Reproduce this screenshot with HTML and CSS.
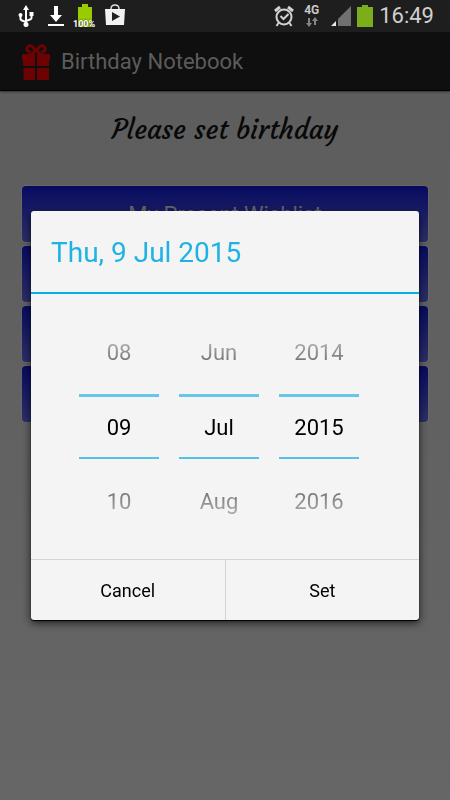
FILE: index.html
```html
<!DOCTYPE html>
<html lang="en">
<head>
<meta charset="utf-8">
<meta name="viewport" content="width=device-width, initial-scale=1">
<title>Birthday Notebook</title>
<link rel="stylesheet" href="styles.css">
</head>
<body>
<div class="status">
  <svg class="usb" width="16" height="24" viewBox="0 0 16 24" fill="none" stroke="#fff" stroke-width="2"><path d="M8 4v16M2.500 12v3q0 1 1.500 1.500L8 18M13.500 11v3q0 1-1.500 1.500L8 17"/><g fill="#fff" stroke="none"><path d="M8 1l3 5H5z"/><circle cx="8" cy="20.500" r="2.500"/><circle cx="2.500" cy="11" r="2"/><path d="M11.500 8h4v4h-4z"/></g></svg>
  <svg class="download" width="16" height="24" viewBox="0 0 16 24" fill="#fff"><path d="M6 2h4v9h4l-6 7-6-7h4zM0 20h16v2H0z"/></svg>
  <div class="charge">
    <svg width="16" height="24" viewBox="0 0 16 24" fill="#99cc00"><path d="M5 0h6v3h4v20H1V3h4z"/></svg>
    <span class="percent">100%</span>
  </div>
  <svg class="store" width="20" height="24" viewBox="0 0 20 24"><path d="M6 8V5q0-4 4-4t4 4v3" fill="none" stroke="#ddd" stroke-width="1.500"/><path d="M0 5h20l-1 16H1z" fill="#f2f2f2"/><path d="M7 8l8 4.500L7 17z" fill="#222"/></svg>
  <svg class="alarm" width="20" height="24" viewBox="0 0 20 24" fill="none" stroke="#d2d2d2" stroke-width="2"><circle cx="10" cy="13" r="7.500"/><path d="M6.500 12l3 3 5-5M4.500 19l-2 3M15.500 19l2 3"/><path d="M1 7l5-4M19 7l-5-4" stroke-width="3"/></svg>
  <div class="network">
    <span>4G</span>
    <svg width="12" height="10" viewBox="0 0 12 10" fill="#858585"><path d="M2 1h2v5h2l-3 4-3-4h2zM8 8h2V4h2L9 0 6 4h2z"/></svg>
  </div>
  <svg class="signal" width="20" height="20" viewBox="0 0 20 20"><path d="M20 0v20H7V13z" fill="#707070"/><path d="M5 15v5H0z" fill="#e8e8e8"/></svg>
  <svg class="battery" width="16" height="22" viewBox="0 0 16 22" fill="#7bae1a"><path d="M5 0h6v2h5v20H0V2h5z"/></svg>
  <time class="clock">16:49</time>
</div>

<header class="bar">
  <svg width="28" height="36" viewBox="0 0 28 36" fill="#6c0202"><path d="M1 10h12v12H1v-6H0v-5zM15 10h12l1 1v5h-1v6H15zM1.500 24H13v12H2.500l-1-1zM15 24h12v11l-1 1H15z"/><path d="M14 8C12 4 10 1.500 8 1.500S4 4 5 6s3 2 4 2M14 8c2-4 4-6.500 6-6.500S24 4 23 6s-3 2-4 2M14 6l-5 5M14 6l5 5" fill="none" stroke="#6c0202" stroke-width="3"/></svg>
  <h1>Birthday Notebook</h1>
</header>

<main class="page">
  <h2>Please set birthday</h2>
  <button class="item" type="button">My Present Wishlist</button>
  <button class="item" type="button" aria-label="Menu item 2"></button>
  <button class="item" type="button" aria-label="Menu item 3"></button>
  <button class="item" type="button" aria-label="Menu item 4"></button>
</main>

<div class="overlay">
  <form class="dialog" role="dialog" aria-labelledby="date-title">
    <h2 class="title" id="date-title">Thu, 9 Jul 2015</h2>
    <div class="pickers">
      <div class="picker">
        <button type="button" class="step prev">08</button>
        <input type="text" aria-label="Day" value="09">
        <button type="button" class="step next">10</button>
      </div>
      <div class="picker">
        <button type="button" class="step prev">Jun</button>
        <input type="text" aria-label="Month" value="Jul">
        <button type="button" class="step next">Aug</button>
      </div>
      <div class="picker">
        <button type="button" class="step prev">2014</button>
        <input type="text" aria-label="Year" value="2015">
        <button type="button" class="step next">2016</button>
      </div>
    </div>
    <div class="actions">
      <button type="button">Cancel</button>
      <button type="button">Set</button>
    </div>
  </form>
</div>
</body>
</html>
```
FILE: styles.css
```css
* { box-sizing: border-box; }

body {
  margin: 0;
  min-height: 100vh;
  background: linear-gradient(#5c5c5c, #666);
  font-family: Roboto, "Liberation Sans", sans-serif;
}

h1, h2 { margin: 0; font-weight: 400; }

button, input {
  margin: 0;
  padding: 0;
  border: 0;
  border-radius: 0;
  background: none;
  font-family: inherit;
}

svg { display: block; flex: none; }

.status {
  display: flex;
  align-items: center;
  height: 32px;
  padding: 0 16px 0 18px;
  background: #1e1e1e;
}

.download { margin-left: 14px; }
.charge { position: relative; margin-left: 13px; }

.percent {
  position: absolute;
  left: -4px;
  bottom: -1px;
  color: #fff;
  font-size: 9px;
  font-weight: 700;
  line-height: 10px;
  text-shadow: 0 0 2px #222;
}

.store { margin-left: 12px; }
.alarm { margin-left: auto; }

.network {
  display: flex;
  flex-direction: column;
  align-items: center;
  gap: 2px;
  margin-left: 10px;
  color: #c8c8c8;
  font-size: 12px;
  font-weight: 700;
  line-height: 10px;
}

.signal { margin-left: 12px; }
.battery { margin-left: 6px; }

.clock {
  margin-left: 6px;
  color: #d0d0d0;
  font-size: 22px;
  line-height: 32px;
}

.bar {
  display: flex;
  align-items: center;
  gap: 11px;
  height: 59px;
  padding: 2px 22px 0;
  border-bottom: 1px solid #000;
  background: #0f0f0f;
  box-shadow: 0 1px 2px #333;
}

.bar h1 {
  color: #5c5c5c;
  font-size: 22px;
  line-height: 28px;
}

.page {
  display: flex;
  flex-direction: column;
  gap: 4px;
  padding: 19px 22px;
}

.page h2 {
  margin-bottom: 32px;
  color: #080808;
  font-family: Courgette, Lato, cursive;
  font-size: 27px;
  line-height: 40px;
  text-align: center;
}

.item {
  height: 56px;
  border-radius: 4px;
  background: linear-gradient(#070b60, #2d3068);
  box-shadow: 0 0 1px 1px #696969;
  color: #65656a;
  font-size: 22px;
}

.overlay {
  position: fixed;
  inset: 31px 0 0;
  display: flex;
  align-items: center;
  justify-content: center;
  padding: 0 31px;
}

.dialog {
  width: 100%;
  overflow: hidden;
  border-radius: 3px;
  background: #f4f4f4;
  box-shadow: 0 1px 1px #000, 0 3px 8px rgba(0, 0, 0, 0.7);
}

.title {
  height: 83px;
  padding: 0 20px;
  border-bottom: 2px solid #06b1e8;
  color: #20b2e2;
  font-size: 28px;
  line-height: 84px;
}

.pickers {
  display: flex;
  gap: 20px;
  padding: 16px 48px;
}

.picker { display: flex; flex-direction: column; width: 80px; }

.step, .picker input {
  font-size: 22px;
  text-align: center;
}

.step {
  height: 84px;
  color: transparent;
  background-clip: text;
}

.prev { background-image: linear-gradient(#f4f4f4, #aaa 40%, #777 60%, #333); }
.next { background-image: linear-gradient(#333, #777 40%, #aaa 65%, #f4f4f4); }

.picker input {
  width: 100%;
  height: 65px;
  border-top: 3px solid #68c7e9;
  border-bottom: 2px solid #55c1e8;
  color: #000;
}

.actions {
  display: flex;
  border-top: 1px solid #d4d4d4;
}

.actions button {
  flex: 1;
  height: 60px;
  color: #000;
  font-size: 18px;
}

.actions button:first-child { border-right: 1px solid #d4d4d4; }
```
